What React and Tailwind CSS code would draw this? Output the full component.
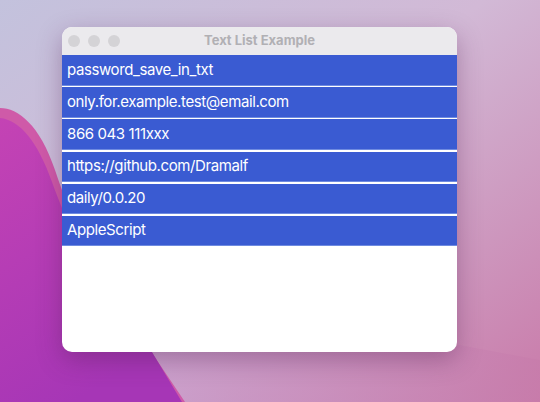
const items = [
  'password_save_in_txt',
  'only.for.example.test@email.com',
  '866 043 111xxx',
  'https://github.com/Dramalf',
  'daily/0.0.20',
  'AppleScript',
];

function Wallpaper() {
  return (
    <svg className="absolute inset-0" width="540" height="402" viewBox="0 0 540 402">
      <defs>
        <linearGradient id="sky" x1="0" y1="0" x2="1" y2="1">
          <stop offset="0" stopColor="#c3c2dd" />
          <stop offset="0.45" stopColor="#d2b9d6" />
          <stop offset="1" stopColor="#c97aa9" />
        </linearGradient>
        <linearGradient id="wave" x1="0" y1="0" x2="0.4" y2="1">
          <stop offset="0" stopColor="#c443b4" />
          <stop offset="1" stopColor="#a636b6" />
        </linearGradient>
        <linearGradient id="haze" x1="0" y1="0" x2="1" y2="0">
          <stop offset="0" stopColor="#c9a0cf" />
          <stop offset="1" stopColor="#c77cab" />
        </linearGradient>
      </defs>
      <rect width="540" height="402" fill="url(#sky)" />
      <path d="M150 402 L130 340 L380 330 L540 360 L540 402 Z" fill="url(#haze)" opacity="0.7" />
      <path
        d="M0 108 C18 108 40 125 55 170 C70 215 100 290 150 350 L185 402 L0 402 Z"
        fill="#cf5aa8"
      />
      <path
        d="M0 118 C20 120 38 142 52 182 C70 232 100 298 152 352 L182 402 L0 402 Z"
        fill="url(#wave)"
      />
    </svg>
  );
}

export default function App() {
  return (
    <div className="relative w-[540px] h-[402px] overflow-hidden font-['Inter',sans-serif]">
      <Wallpaper />
      <div className="relative ml-[62px] pt-[27px]">
        <div className="w-[395px] h-[325px] bg-white rounded-[10px] overflow-hidden shadow-[0_8px_24px_rgba(80,30,80,0.35)] flex flex-col">
          <div className="relative h-[28px] bg-[#ebeaed] flex items-center">
            <div className="flex gap-[8px] pl-[6px]">
              <span className="w-[12px] h-[12px] rounded-full bg-[#d4d3d6]" />
              <span className="w-[12px] h-[12px] rounded-full bg-[#d4d3d6]" />
              <span className="w-[12px] h-[12px] rounded-full bg-[#d4d3d6]" />
            </div>
            <div className="absolute inset-0 flex items-center justify-center text-[13px] font-bold text-[#b1b0b4]">
              Text List Example
            </div>
          </div>
          <ul className="flex flex-col">
            {items.map((item) => (
              <li
                key={item}
                className="h-[30.5px] mb-[1.7px] bg-[#3a5bd2] text-white text-[15px] tracking-[-0.4px] flex items-center pl-[5px] border-b border-[#6f8be0]"
              >
                {item}
              </li>
            ))}
          </ul>
        </div>
      </div>
    </div>
  );
}
